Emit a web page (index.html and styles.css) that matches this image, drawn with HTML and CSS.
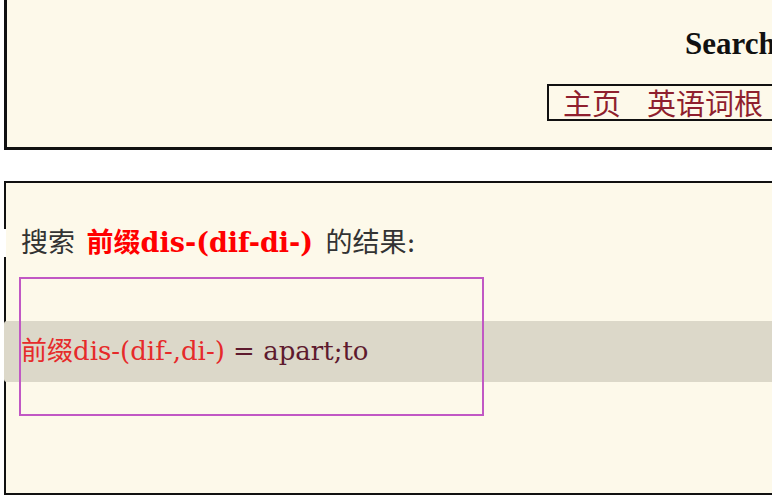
FILE: index.html
```
<!DOCTYPE html>
<html lang="zh-CN">
<head>
    <meta charset="UTF-8">
    <title>词根搜索</title>
    <link rel="stylesheet" href="styles.css">
</head>
<body>
<div class="page">
    <div class="header">
        <h1 class="title">Search English Roots</h1>
        <p class="nav"><a href="#">主页</a><a href="#">英语词根</a><a href="#">前缀</a></p>
    </div>

    <div class="result">
        <p class="query">搜索 <b>前缀dis-(dif-di-)</b> 的结果:</p>
        <div class="row">
            <span class="word">前缀dis-(dif-,di-)</span> = apart;to
        </div>
        <div class="pick"></div>
    </div>
</div>
</body>
</html>
```

FILE: styles.css
```
html{
    overflow: hidden;
}
body{
    margin: 0;
    background-color: #fff;
    font-family: "DejaVu Serif", "Noto Sans CJK SC", serif;
}
.page{
    padding: 0 4px;
    width: 1200px;
}
.header{
    background-color: #fdf9ea;
    border: 3px solid #111;
    border-top: none;
    border-right: none;
    padding: 27px 0 26px;
}
.title{
    margin: 0 0 0 678px;
    font-family: "Liberation Serif", serif;
    font-size: 31px;
    line-height: 34px;
    font-weight: bold;
    color: #111;
    white-space: nowrap;
}
.nav{
    display: flex;
    width: max-content;
    margin: 23px 0 0 540px;
    border: 2px solid #111;
    padding-left: 1px;
    white-space: nowrap;
}
.nav a{
    display: block;
    padding: 0 13px;
    height: 33px;
    line-height: 33px;
    font-family: "Noto Sans CJK SC", sans-serif;
    font-size: 29px;
    color: #8f1f2e;
    text-decoration: none;
}
.result{
    position: relative;
    margin-top: 31px;
    background-color: #fdf9ea;
    border: 2px solid #111;
    border-right: none;
    padding: 42px 0 111px;
}
.query{
    position: relative;
    margin: 0;
    padding-left: 15px;
    font-family: "DejaVu Serif", "Noto Sans CJK SC", serif;
    font-size: 27px;
    line-height: 36px;
    color: #333;
}
.query::before{
    content: "";
    position: absolute;
    left: -3px;
    top: 4px;
    width: 3px;
    height: 28px;
    background-color: #fff;
}
.query b{
    margin: 0 4px 0 3px;
    color: #f00;
}
.row{
    margin: 60px 0 0 -2px;
    padding-left: 17px;
    height: 61px;
    line-height: 61px;
    border-radius: 3px 0 0 3px;
    background-color: #dcd8c9;
    font-size: 26px;
    color: #5e1a2e;
    white-space: nowrap;
}
.word{
    color: #e62a2a;
}
.pick{
    position: absolute;
    left: 13px;
    top: 94px;
    width: 465px;
    height: 139px;
    box-sizing: border-box;
    border: 2px solid #c158c4;
}
```
